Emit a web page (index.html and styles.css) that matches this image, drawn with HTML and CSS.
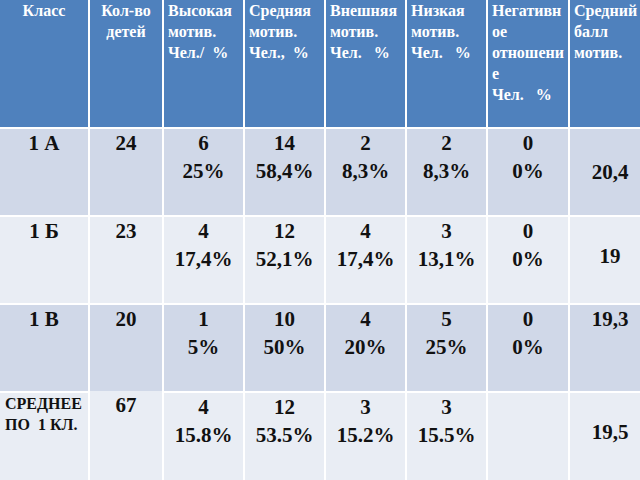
FILE: index.html
```html
<!DOCTYPE html>
<html lang="ru">
<head>
<meta charset="utf-8">
<title>Мотивация</title>
<link rel="stylesheet" href="styles.css">
</head>
<body>
<div class="table">
  <div class="th center">Класс</div>
  <div class="th center">Кол-во<br>детей</div>
  <div class="th">Высокая<br>мотив.<br>Чел./&nbsp; %</div>
  <div class="th">Средняя<br>мотив.<br>Чел.,&nbsp; %</div>
  <div class="th">Внешняя<br>мотив.<br>Чел.&nbsp;&nbsp; %</div>
  <div class="th">Низкая<br>мотив.<br>Чел.&nbsp;&nbsp; %</div>
  <div class="th">Негативн<br>ое<br>отношени<br>е<br>Чел.&nbsp;&nbsp; %</div>
  <div class="th">Средний<br>балл<br>мотив.</div>

  <div class="td dark">1 А</div>
  <div class="td dark">24</div>
  <div class="td dark">6<br>25%</div>
  <div class="td dark">14<br>58,4%</div>
  <div class="td dark">2<br>8,3%</div>
  <div class="td dark">2<br>8,3%</div>
  <div class="td dark">0<br>0%</div>
  <div class="td dark avg avg-mid1">20,4</div>

  <div class="td light">1 Б</div>
  <div class="td light">23</div>
  <div class="td light">4<br>17,4%</div>
  <div class="td light">12<br>52,1%</div>
  <div class="td light">4<br>17,4%</div>
  <div class="td light">3<br>13,1%</div>
  <div class="td light">0<br>0%</div>
  <div class="td light avg avg-mid">19</div>

  <div class="td dark">1 В</div>
  <div class="td dark">20</div>
  <div class="td dark">1<br>5%</div>
  <div class="td dark">10<br>50%</div>
  <div class="td dark">4<br>20%</div>
  <div class="td dark">5<br>25%</div>
  <div class="td dark">0<br>0%</div>
  <div class="td dark avg">19,3</div>

  <div class="td light total">СРЕДНЕЕ<br>ПО&nbsp; 1 КЛ.</div>
  <div class="td light up">67</div>
  <div class="td light">4<br>15.8%</div>
  <div class="td light">12<br>53.5%</div>
  <div class="td light">3<br>15.2%</div>
  <div class="td light">3<br>15.5%</div>
  <div class="td light"></div>
  <div class="td light avg avg-mid">19,5</div>
</div>
</body>
</html>
```

FILE: styles.css
```css
html, body {
  margin: 0;
  padding: 0;
  background: #ffffff;
}

.table {
  width: 640px;
  height: 480px;
  display: grid;
  grid-template-columns: 88px 72px 79px 79px 79px 79px 80px 70px;
  grid-template-rows: 127px 86px 86px 86px 87px;
  gap: 2px;
  background: #ffffff;
  font-family: "Liberation Serif", "DejaVu Serif", serif;
  font-weight: 700;
  overflow: hidden;
}

.th {
  background: #4f81bd;
  color: #ffffff;
  font-family: "Liberation Serif", "DejaVu Serif", serif;
  font-size: 16px;
  line-height: 21px;
  padding-left: 4px;
  white-space: nowrap;
}

.th.center {
  text-align: center;
  padding-left: 0;
}

.td {
  color: #111111;
  font-family: "Liberation Serif", "DejaVu Serif", serif;
  font-size: 21px;
  line-height: 28px;
  text-align: center;
  white-space: nowrap;
}

.dark {
  background: #d0d8e8;
}

.light {
  background: #e9edf4;
}

.avg {
  padding-left: 10px;
}

.avg-mid1 {
  padding-top: 29px;
}

.avg-mid {
  padding-top: 25px;
}

.up {
  margin-top: -2px;
  padding-top: 2px;
  line-height: 24px;
}

.total {
  font-size: 16px;
  line-height: 21px;
  text-align: left;
  padding-left: 5px;
}
```
